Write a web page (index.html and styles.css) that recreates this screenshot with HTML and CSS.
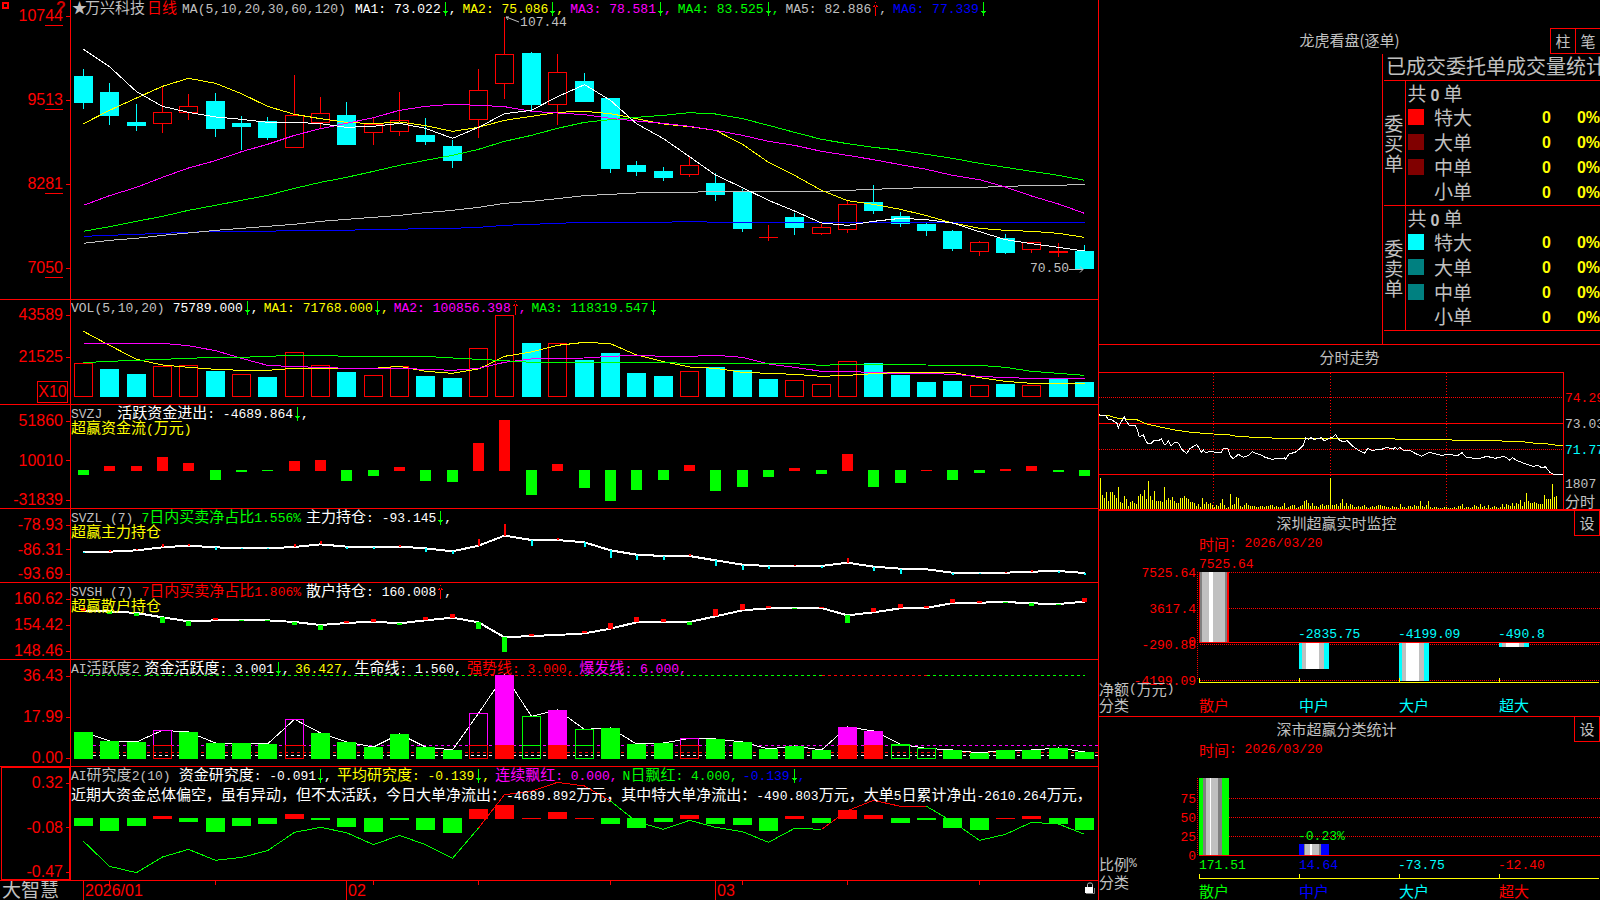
FILE: index.html
```html
<!DOCTYPE html>
<html lang="zh-CN">
<head>
<meta charset="utf-8">
<meta name="viewport" content="width=device-width, initial-scale=1">
<title>万兴科技 日线</title>
<link rel="stylesheet" href="styles.css">
</head>
<body>
<svg class="defs" aria-hidden="true">
  <symbol id="down" viewBox="0 0 8 14"><path d="M4 0H5V14H4Z M2 9H7L4.500 13Z" fill="#0f0"/></symbol>
  <symbol id="up" viewBox="0 0 8 14"><path d="M4 0H5V14H4Z M2 5H7L4.500 1Z" fill="#f00"/></symbol>
</svg>
<main class="terminal">
  <div class="charts">
    <section class="pane">
      <div class="axis axis-price">
        <span>107<u>44</u></span><span>95<u>13</u></span><span>82<u>81</u></span><span>70<u>50</u></span>
        <svg class="corner" viewBox="0 0 8 8" aria-hidden="true"><rect x="1" y="1" width="5" height="5" fill="none" stroke="#f00" stroke-width="2"/></svg>
        <b class="help">?</b>
      </div>
      <svg class="plot" id="price" viewBox="0 0 1027 897" preserveAspectRatio="none"></svg>
      <header class="legend">
        <p class="row first">
          <span class="gray zh star">★</span><span class="gray zh">万兴科技</span><span class="red zh">日线</span><span class="gray params">MA(5,10,20,30,60,120)</span>
          <span class="white">MA1: 73.022<svg class="arr"><use href="#down"/></svg>,</span>
          <span class="yellow">MA2: 75.086<svg class="arr"><use href="#down"/></svg>,</span>
          <span class="magenta">MA3: 78.581<svg class="arr"><use href="#down"/></svg>,</span>
          <span class="green">MA4: 83.525<svg class="arr"><use href="#down"/></svg>,</span>
          <span class="gray">MA5: 82.886<svg class="arr"><use href="#up"/></svg>,</span>
          <span class="blue">MA6: 77.339<svg class="arr"><use href="#down"/></svg></span>
        </p>
      </header>
      <span class="callout high"><svg width="15" height="8" viewBox="0 0 15 8"><path d="M1 1L14 6M1 1H4M1 1L3 4" fill="none" stroke="#c0c0c0"/></svg>107.44</span>
      <span class="callout low">70.50<svg width="15" height="8" viewBox="0 0 15 8"><path d="M0 4.5H14M11 1.5L14 4.5L11 7.5" fill="none" stroke="#c0c0c0"/></svg></span>
    </section>

    <section class="pane">
      <div class="axis axis-volume"><span>43589</span><span>21525</span><em>X10</em></div>
      <svg class="plot" id="volume" viewBox="0 15 1027 312" preserveAspectRatio="none"></svg>
      <header class="legend">
        <p class="row plain">
          <span class="gray name">VOL(5,10,20)</span>
          <span class="white">75789.000<svg class="arr"><use href="#down"/></svg>,</span>
          <span class="yellow">MA1: 71768.000<svg class="arr"><use href="#down"/></svg>,</span>
          <span class="magenta">MA2: 100856.398<svg class="arr"><use href="#up"/></svg>,</span>
          <span class="green">MA3: 118319.547<svg class="arr"><use href="#down"/></svg></span>
        </p>
      </header>
    </section>

    <section class="pane">
      <div class="axis"><span>51860</span><span>10010</span><span>-31839</span></div>
      <svg class="plot" id="flow" viewBox="0 330 1027 309" preserveAspectRatio="none"></svg>
      <header class="legend">
        <p class="row"><span class="gray name-wide">SVZJ</span><span class="white"><i>活跃资金进出</i>: -4689.864<svg class="arr"><use href="#down"/></svg>,</span></p>
        <p class="row yellow"><span><i>超赢资金流</i>(<i>万元</i>)</span></p>
      </header>
    </section>

    <section class="pane">
      <div class="axis"><span>-78.93</span><span>-86.31</span><span>-93.69</span></div>
      <svg class="plot" id="main-hold" viewBox="0 12 1027 219" preserveAspectRatio="none"></svg>
      <header class="legend">
        <p class="row"><span class="gray name">SVZL (7)</span><span class="green">7<i>日内买卖净占比</i>1.556%</span><span class="white"><i>主力持仓</i>: -93.145<svg class="arr"><use href="#down"/></svg>,</span></p>
        <p class="row yellow"><span><i>超赢主力持仓</i></span></p>
      </header>
    </section>

    <section class="pane">
      <div class="axis"><span>160.62</span><span>154.42</span><span>148.46</span></div>
      <svg class="plot" id="retail-hold" viewBox="0 234 1027 228" preserveAspectRatio="none"></svg>
      <header class="legend">
        <p class="row"><span class="gray name">SVSH (7)</span><span class="red">7<i>日内买卖净占比</i>1.806%</span><span class="white"><i>散户持仓</i>: 160.008<svg class="arr"><use href="#up"/></svg>,</span></p>
        <p class="row yellow"><span><i>超赢散户持仓</i></span></p>
      </header>
    </section>

    <section class="pane">
      <div class="axis"><span>36.43</span><span>17.99</span><span>0.00</span></div>
      <svg class="plot" id="activity" viewBox="0 15 1027 318" preserveAspectRatio="none"></svg>
      <header class="legend">
        <p class="row">
          <span class="gray">AI<i>活跃度</i>2</span>
          <span class="white"><i>资金活跃度</i>: 3.001<svg class="arr"><use href="#down"/></svg>,</span>
          <span class="yellow">36.427,</span>
          <span class="white"><i>生命线</i>: 1.560,</span>
          <span class="red"><i>强势线</i>: 3.000,</span>
          <span class="magenta"><i>爆发线</i>: 6.000,</span>
        </p>
      </header>
    </section>

    <section class="pane">
      <div class="axis selected"><span>0.32</span><span>-0.08</span><span>-0.47</span></div>
      <svg class="plot" id="research" viewBox="0 336 1027 339" preserveAspectRatio="none"></svg>
      <header class="legend">
        <p class="row">
          <span class="gray name">AI<i>研究度</i>2(10)</span>
          <span class="white"><i>资金研究度</i>: -0.091<svg class="arr"><use href="#down"/></svg>,</span>
          <span class="yellow"><i>平均研究度</i>: -0.139<svg class="arr"><use href="#down"/></svg>,</span>
          <span class="magenta"><i>连续飘红</i>: 0.000,</span>
          <span class="green">N<i>日飘红</i>: 4.000,</span>
          <span class="blue">-0.139<svg class="arr"><use href="#down"/></svg>,</span>
        </p>
        <p class="row note white"><span><i>近期大资金总体偏空，虽有异动，但不太活跃，今日大单净流出：</i>-4689.892<i>万元，其中特大单净流出：</i>-490.803<i>万元，大单</i>5<i>日累计净出</i>-2610.264<i>万元，</i></span></p>
      </header>
    </section>

    <footer class="timeline">
      <strong>大智慧</strong>
      <div class="dates" id="dates">
        <svg class="lock" viewBox="0 0 10 12" aria-hidden="true"><path d="M2.5 5V2.5L3.500 1H6.500L7.500 2.500V5" fill="none" stroke="#c0c0c0"/><path d="M1 11.500H9.500V6" fill="none" stroke="#808080"/><rect x="0" y="5" width="8" height="6" fill="#fff"/></svg>
      </div>
    </footer>
  </div>

  <aside class="side">
    <section class="orders">
      <div class="orders-head"><h2>龙虎看盘(逐单)</h2><div class="buttons"><button type="button">柱</button><button type="button">笔</button></div></div>
      <div class="orders-body">
        <h3>已成交委托单成交量统计</h3>
        <table>
          <tbody>
            <tr><th class="group" rowspan="5" scope="rowgroup">委买单</th><td class="total" colspan="4">共<b>0</b>单</td></tr>
            <tr><td class="sw"><span class="swatch s-red"></span></td><th scope="row">特大</th><td class="num">0</td><td class="pct">0%</td></tr>
            <tr><td class="sw"><span class="swatch s-maroon"></span></td><th scope="row">大单</th><td class="num">0</td><td class="pct">0%</td></tr>
            <tr><td class="sw"><span class="swatch s-maroon"></span></td><th scope="row">中单</th><td class="num">0</td><td class="pct">0%</td></tr>
            <tr><td class="sw"></td><th scope="row">小单</th><td class="num">0</td><td class="pct">0%</td></tr>
          </tbody>
          <tbody>
            <tr><th class="group" rowspan="5" scope="rowgroup">委卖单</th><td class="total" colspan="4">共<b>0</b>单</td></tr>
            <tr><td class="sw"><span class="swatch s-cyan"></span></td><th scope="row">特大</th><td class="num">0</td><td class="pct">0%</td></tr>
            <tr><td class="sw"><span class="swatch s-teal"></span></td><th scope="row">大单</th><td class="num">0</td><td class="pct">0%</td></tr>
            <tr><td class="sw"><span class="swatch s-teal"></span></td><th scope="row">中单</th><td class="num">0</td><td class="pct">0%</td></tr>
            <tr><td class="sw"></td><th scope="row">小单</th><td class="num">0</td><td class="pct">0%</td></tr>
          </tbody>
        </table>
      </div>
    </section>

    <section class="intraday">
      <h2>分时走势</h2>
      <div class="intraday-body">
        <svg class="plot-min" id="minute" viewBox="12 99 1392 408" preserveAspectRatio="none"></svg>
        <div class="scale"><span class="red">74.29</span><span class="gray">73.03</span><span class="cyan">71.77</span><span class="gray small vol">1807</span><span class="gray small zh">分时</span></div>
      </div>
    </section>

    <section class="stat">
      <div class="stat-head"><h2>深圳超赢实时监控</h2><button type="button">设</button></div>
      <svg class="bars" viewBox="1099 536 501 180" preserveAspectRatio="xMinYMin meet">
        <g class="grid"><path d="M1197.5 572V680M1229 572.5H1600M1229 608.5H1600M1200 644.5H1600M1200 680.5H1600"/></g>
        <g id="bars1"></g>
        <path class="zero" d="M1199 642.5H1600"/>
        <path class="base" d="M1199.500 678V682.500H1599M1299.500 678V682M1399.500 678V682M1499.500 678V682"/>
        <g class="red"><text x="1199" y="543"><tspan class="zh">时间</tspan>: 2026/03/20</text><text x="1199" y="564">7525.64</text></g>
        <g class="red end"><text x="1196" y="573">7525.64</text><text x="1196" y="609">3617.4</text><text x="1196" y="642">0</text><text x="1196" y="645">-290.88</text><text x="1196" y="681">-4199.09</text></g>
        <g class="cyan"><text x="1298" y="634">-2835.75</text><text x="1398" y="634">-4199.09</text><text x="1498" y="634">-490.8</text></g>
        <g class="gray"><text x="1099" y="688"><tspan class="zh">净额</tspan>(<tspan class="zh">万元</tspan>)</text><text class="zh" x="1099" y="704">分类</text></g>
        <g class="zh"><text class="red" x="1199" y="704">散户</text><text class="cyan" x="1299" y="704">中户</text><text class="cyan" x="1399" y="704">大户</text><text class="cyan" x="1499" y="704">超大</text></g>
      </svg>
    </section>

    <section class="stat last">
      <div class="stat-head"><h2>深市超赢分类统计</h2><button type="button">设</button></div>
      <svg class="bars" viewBox="1099 742 501 158" preserveAspectRatio="xMinYMin meet">
        <g class="grid"><path d="M1197.500 778V855M1229 798.500H1600M1229 817.500H1600M1229 836.500H1600"/></g>
        <g id="bars2"></g>
        <path class="zero" d="M1199 855.500H1600"/>
        <path class="base" d="M1199.500 874V878.500H1599M1299.500 874V878M1399.500 874V878M1499.500 874V878"/>
        <g class="red"><text x="1199" y="749"><tspan class="zh">时间</tspan>: 2026/03/20</text></g>
        <g class="red end"><text x="1196" y="799">75</text><text x="1196" y="818">50</text><text x="1196" y="837">25</text><text x="1196" y="856">0</text></g>
        <text class="green" x="1298" y="836">-0.23%</text>
        <text class="green" x="1199" y="865">171.51</text><text class="blue" x="1299" y="865">14.64</text><text class="cyan" x="1398" y="865">-73.75</text><text class="red" x="1498" y="865">-12.40</text>
        <g class="gray"><text x="1099" y="863"><tspan class="zh">比例</tspan>%</text><text class="zh" x="1099" y="881">分类</text></g>
        <g class="zh"><text class="green" x="1199" y="890">散户</text><text class="blue" x="1299" y="890">中户</text><text class="cyan" x="1399" y="890">大户</text><text class="red" x="1499" y="890">超大</text></g>
      </svg>
    </section>
  </aside>
</main>
<script src="charts.js"></script>
</body>
</html>
```

FILE: styles.css
```css
* { box-sizing: border-box; }
body {
  margin: 0;
  background: #000;
  color: #c0c0c0;
  font-family: "Liberation Mono", "Noto Sans CJK SC", monospace;
  font-size: 13px;
  line-height: 16px;
  overflow: hidden;
}
h2, h3, p { margin: 0; font-weight: normal; }
i { font-style: normal; }
i, .zh { font-family: "Noto Sans CJK SC", sans-serif; font-size: 15px; }
.defs { position: absolute; width: 0; height: 0; }
.white { color: #fff; fill: #fff; }
.gray { color: #c0c0c0; fill: #c0c0c0; }
.red { color: #f00; fill: #f00; }
.yellow { color: #ff0; fill: #ff0; }
.magenta { color: #f0f; fill: #f0f; }
.green { color: #0f0; fill: #0f0; }
.cyan { color: #0ff; fill: #0ff; }
.blue { color: #00f; fill: #00f; }

.terminal {
  display: grid;
  grid-template-columns: minmax(0, 1099fr) minmax(0, 501fr);
  min-height: 100vh;
}
.charts {
  display: grid;
  grid-template-rows: minmax(0, 300fr) minmax(0, 105fr) minmax(0, 104fr) minmax(0, 74fr) minmax(0, 77fr) minmax(0, 107fr) minmax(0, 114fr) 19px;
  height: 100vh;
  border-right: 1px solid #f00;
}
.pane {
  position: relative;
  display: grid;
  grid-template: minmax(0, 1fr) / 71px minmax(0, 1fr);
  border-bottom: 1px solid #f00;
  overflow: hidden;
}
.axis {
  display: flex;
  flex-direction: column;
  align-items: flex-end;
  justify-content: space-between;
  padding: 8px 0 0;
  border-right: 1px solid #f00;
  color: #f00;
  font-family: "Liberation Sans", sans-serif;
  font-size: 16px;
}
.axis span { display: flex; align-items: center; }
.axis span::after { content: ""; width: 4px; height: 1px; margin: 0 0 0 3px; background: #f00; }
.axis u { text-decoration: none; height: 18px; line-height: 16px; margin-bottom: -2px; border-bottom: 1px solid #f00; }
.axis-price { padding-bottom: 23px; }
.axis-volume { padding-top: 7px; }
.axis-volume span + span { margin: auto 0 16px; }
.axis-volume em { font-style: normal; line-height: 20px; width: 31px; margin: 0 2px 1px 0; border: 1px solid #f00; text-align: center; }
.selected { box-shadow: inset 0 0 0 1px #f00; margin-left: 1px; }
.corner { position: absolute; left: 2px; top: 2px; width: 8px; height: 8px; }
.help { position: absolute; left: 56px; top: 0; color: #d00000; font-size: 16px; }
.plot, .legend { grid-area: 1 / 2; }
.plot { display: block; width: 100%; height: 100%; }
.plot, .plot-min { shape-rendering: crispEdges; }
.plot *, .plot-min * { vector-effect: non-scaling-stroke; }
.legend { position: relative; overflow: hidden; }
.row { display: flex; align-items: baseline; gap: 5px; white-space: pre; height: 15px; line-height: 14px; }
.row > span { flex: none; }
.row .name { margin-right: 3px; }
.row .name-wide { margin-right: 10px; }
.first { gap: 6px; padding-left: 1px; }
.first .zh { margin-right: -4px; }
.first .star { margin-right: -8px; }
.first .params { margin: 0 3px 0 3px; }
.plain { padding-top: 1px; }
.note { margin-top: 5px; height: 16px; }
.arr { width: 8px; height: 14px; vertical-align: -3px; shape-rendering: crispEdges; }
.callout { position: absolute; display: flex; align-items: center; line-height: 14px; }
.callout.high { left: 46%; top: 16px; }
.callout.high svg { margin-top: -6px; }
.callout.low { right: 14px; bottom: 23px; }

.timeline { display: grid; grid-template-columns: 71px minmax(0, 1fr); }
.timeline strong { font: 19px/16px "Noto Sans CJK SC", sans-serif; padding-left: 2px; }
.dates { position: relative; }
.dates span {
  position: absolute; top: 0; height: 19px; padding-left: 1px;
  border-left: 1px solid #f00; color: #f00;
  font: 16px/19px "Liberation Sans", sans-serif;
}
.dates i { position: absolute; top: 0; width: 1px; height: 4px; background: #f00; }
.lock { position: absolute; right: 3px; top: 1px; width: 10px; height: 12px; }

.side {
  display: grid;
  grid-template-rows: minmax(0, 345fr) minmax(0, 166fr) minmax(0, 206fr) minmax(0, 183fr);
  height: 100vh;
  overflow: hidden;
}
.side h2 { font: 15px/23px "Noto Sans CJK SC", sans-serif; text-align: center; }
.side section { overflow: hidden; border-bottom: 1px solid #f00; }
.side .last { border-bottom: 0; }
button {
  width: 26px; height: 26px; padding: 0;
  border: 1px solid #f00; background: #000; color: #c0c0c0;
  font: 15px/20px "Noto Sans CJK SC", sans-serif;
}
.orders { display: flex; flex-direction: column; }
.orders-head { display: grid; padding-top: 28px; }
.orders-head h2, .buttons { grid-area: 1 / 1; }
.buttons { display: flex; justify-self: end; margin-right: -1px; }
.buttons button + button { margin-left: -1px; }
.orders-body { flex: 1; width: 218px; margin-left: auto; border-left: 1px solid #f00; padding-left: 1px; }
.orders h3 { font: 20px/24px "Noto Sans CJK SC", sans-serif; padding: 0 0 2px 2px; white-space: nowrap; overflow: hidden; }
table { width: 100%; border-collapse: collapse; table-layout: auto; border-bottom: 1px solid #f00; }
tbody { border-top: 1px solid #f00; }
td, th { padding: 0; height: 25px; font: 19px/20px "Noto Sans CJK SC", sans-serif; text-align: left; }
th[scope="row"] { padding-bottom: 3px; }
th.group { width: 21px; padding: 0 1px 0 0; border-right: 1px solid #f00; text-align: center; word-break: break-all; }
.total { padding-left: 2px; }
.total b, td.num, td.pct { font-family: "Liberation Sans", sans-serif; font-size: 16px; font-weight: bold; }
.total b { display: inline-block; margin: 0 4px; line-height: 16px; }
td.sw { width: 29px; padding: 0 0 3px 2px; }
td.num { color: #ff0; text-align: right; width: 60px; }
td.pct { color: #ff0; text-align: right; width: 49px; }
.swatch { display: block; width: 16px; height: 16px; }
.s-red { background: #f00; }
.s-maroon { background: #800000; }
.s-cyan { background: #0ff; }
.s-teal { background: #008080; }

.side .intraday { display: flex; flex-direction: column; border-bottom-width: 2px; }
.side .intraday h2 { padding-bottom: 4px; }
.intraday-body { flex: 1; min-height: 0; display: grid; grid-template: minmax(0, 1fr) / minmax(0, 1fr) 36px; }
.plot-min { display: block; width: 100%; height: 100%; border-top: 1px solid #f00; border-right: 1px solid #f00; }
.scale { display: flex; flex-direction: column; padding: 14px 0 0 1px; overflow: hidden; }
.scale span { line-height: 26px; white-space: nowrap; }
.scale .small { line-height: 16px; }
.scale .vol { margin-top: 13px; }

.stat-head { display: flex; height: 25px; }
.stat-head h2 { flex: 1; }
.stat-head button { margin-top: -1px; }
.bars { display: block; width: 100%; overflow: visible; shape-rendering: crispEdges; }
.bars text { dominant-baseline: central; }
.bars .end { text-anchor: end; }
.bars path { fill: none; }
.grid path { stroke: #f00; stroke-dasharray: 1 1; }
.zero { stroke: #f00; }
.base { stroke: #ff0; }
```

FILE: charts.js
```js
const NS = 'http://www.w3.org/2000/svg';
const RED = '#f00', CYAN = '#0ff', GREEN = '#0f0', WHITE = '#fff', YELLOW = '#ff0', MAGENTA = '#f0f', GRAY = '#c0c0c0', BLUE = '#00f';
const STEP = 1001 / 38;
const cx = i => Math.floor(12.5 + STEP * i) + 0.5;

function add(parent, tag, attrs) {
  const el = document.createElementNS(NS, tag);
  for (const key in attrs) el.setAttribute(key, attrs[key]);
  parent.appendChild(el);
  return el;
}
const byId = id => document.getElementById(id);
const fill = (svg, x, y, w, h, color) => add(svg, 'rect', { x, y, width: w, height: h, fill: color });
const outline = (svg, i, top, bottom, color) =>
  add(svg, 'rect', { x: cx(i) - 9, y: top, width: 18, height: Math.max(bottom - top, 0.1), fill: 'none', stroke: color });
const solid = (svg, i, top, bottom, color, half = 9.5) => fill(svg, cx(i) - half, top, half * 2, bottom - top, color);
const segment = (svg, x1, y1, x2, y2, color, dash) =>
  add(svg, 'line', Object.assign({ x1, y1, x2, y2, stroke: color }, dash ? { 'stroke-dasharray': dash } : {}));
function series(svg, ys, color, width = 1, from = 0, to = ys.length - 1) {
  const points = [];
  for (let i = from; i <= to; i++) points.push(cx(i) + ',' + ys[i]);
  add(svg, 'polyline', { points: points.join(' '), fill: 'none', stroke: color, 'stroke-width': width });
}

/* Candles: colour, body top, body bottom, high, low */
const candles = [
  ['C',228,309,207,327],['C',276,348,249,375],['C',366,378,312,393],['R',337,371,261,399],['R',319,338,282,360],
  ['C',303,387,279,411],['C',369,381,348,450],['C',363,414,351,420],['R',346,443,225,443],['R',340,368,291,388],
  ['C',345,435,306,435],['R',374,398,354,435],['R',361,395,276,408],['C',405,426,354,435],['C',438,483,420,504],
  ['R',271,359,207,414],['R',163,251,50,297],['C',159,315,156,330],['R',217,314,162,375],['C',243,306,219,306],
  ['C',294,507,294,519],['C',495,516,483,528],['C',513,534,501,543],['R',496,524,468,531],['C',549,585,519,603],
  ['C',573,687,567,696],['R',712,712,675,723],['C',651,684,639,705],['R',682,701,672,705],['R',613,689,602,699],
  ['C',606,633,555,642],['C',648,672,636,681],['C',672,693,669,708],['C',693,747,690,753],['R',727,755,723,768],
  ['C',714,759,702,762],['R',727,749,725,759],['R',754,758,729,771],['C',753,807,735,807]
];
const price = byId('price');
candles.forEach(([kind, top, bottom, high, low], i) => {
  const x = cx(i);
  if (kind === 'C') {
    segment(price, x, high, x, low, CYAN);
    solid(price, i, top, bottom, CYAN);
  } else {
    segment(price, x, high, x, top, RED);
    segment(price, x, bottom, x, low, RED);
    outline(price, i, top, bottom, RED);
  }
});
[
  [BLUE, [709,706,703,700,697,694,694,694,691,691,691,688,688,685,685,682,676,673,670,667,667,667,667,664,667,667,667,667,667,667,667,667,667,667,667,667,667,667,667]],
  [GRAY, [730,721,715,706,699,691,685,679,673,664,658,652,646,638,631,622,610,604,596,587,583,579,577,577,574,574,574,574,574,571,568,565,563,562,562,559,557,556,553]],
  [YELLOW, [371,331,294,259,235,250,281,319,343,356,367,371,366,377,394,382,361,349,337,334,341,356,372,380,391,433,487,526,571,602,613,628,647,669,685,691,694,700,712]],
  [GREEN, [694,680,664,649,631,616,601,586,565,547,532,514,496,481,466,448,424,406,385,367,359,352,346,338,342,356,376,397,418,431,442,451,463,475,490,502,514,526,541]],
  [MAGENTA, [616,587,562,532,504,482,455,433,406,386,370,353,331,319,313,316,320,334,339,344,355,363,370,379,391,406,424,436,454,466,479,494,508,526,539,561,588,612,640]],
  [WHITE, [148,200,275,319,337,351,358,367,367,371,382,379,370,385,415,382,341,331,290,254,301,371,416,470,525,563,601,633,669,676,664,655,659,669,695,719,731,742,753]]
].forEach(([color, ys]) => series(price, ys, color));

const volume = byId('volume');
const volumeTops = [205,222,237,214,211,228,238,246,172,211,231,241,214,243,249,160,61,144,145,195,174,234,243,229,216,225,252,256,268,199,204,240,261,258,271,267,271,252,261];
const volumeKinds = 'RCCRRCRCRRCRRCCRRCRCCCCRCCCRRRCCCCRCRCC';
volumeTops.forEach((top, i) => volumeKinds[i] === 'C' ? solid(volume, i, top, 306, CYAN) : outline(volume, i, top, 304, RED));
series(volume, [109,151,193,210,217,223,226,226,220,220,220,220,214,229,235,222,184,171,151,142,146,180,200,216,220,232,235,238,244,241,236,232,232,232,248,259,265,265,265], YELLOW);
series(volume, [145,145,145,145,152,167,190,211,215,217,220,220,220,223,226,220,202,192,190,189,184,181,184,184,181,187,207,217,229,229,233,235,235,238,244,248,250,250,250], MAGENTA);
series(volume, [203,199,196,193,190,187,187,184,181,181,184,184,184,184,189,193,197,202,202,202,202,202,203,205,205,205,205,206,211,208,208,208,210,211,211,217,229,235,241], GREEN);

const flow = byId('flow');
[540,513,513,486,504,555,531,528,498,495,558,543,516,558,561,444,375,600,507,579,618,585,555,510,588,576,546,519,537,477,576,564,525,555,534,522,513,531,543]
  .forEach((y, i) => y > 526 ? solid(flow, i, 525, y, GREEN, 5.5) : solid(flow, i, y, 528, RED, 5.5));

function holding(id, line, marks, negative, half) {
  const svg = byId(id);
  series(svg, line, WHITE, 2);
  marks.forEach((y, i) => {
    const up = y < line[i];
    solid(svg, i, Math.min(y, line[i]), Math.max(y, line[i]), up ? RED : negative, half);
  });
}
holding('main-hold',
  [141,140,136,127,122,127,130,130,126,118,125,126,125,130,139,122,92,105,105,112,136,149,153,153,166,179,183,183,183,173,185,191,193,203,204,203,200,198,204],
  [144,135,132,117,117,135,132,132,117,108,132,132,120,141,147,102,57,123,99,126,159,165,165,147,183,195,192,180,189,159,198,207,192,210,207,201,195,204,210], CYAN, 1);
holding('retail-hold',
  [319,319,324,337,349,346,345,346,351,360,354,350,355,346,338,352,397,393,390,385,371,352,351,351,334,316,310,309,309,331,322,310,309,294,293,291,295,297,290],
  [310,327,333,354,363,339,348,348,360,375,348,342,360,336,327,372,441,387,389,378,354,336,342,360,312,297,303,312,306,354,309,297,303,282,288,294,303,300,279], GREEN, 2.5);

/* G solid green, H hollow magenta/red, F filled magenta/red, O hollow green */
const activity = byId('activity');
const activityTops = [231,258,261,226,231,264,264,267,193,234,261,276,237,276,285,175,60,184,165,223,219,267,264,250,252,261,282,273,285,216,228,268,280,285,294,285,285,279,291];
const activityKinds = 'GGGHGGGGHGGGGGGHFOFOGGGHGGGGGFFOOGGGGGG';
[[0,15,GREEN],[15,19,RED],[19,28,GREEN],[28,32,RED],[32,38,GREEN]].forEach(([a, b, color]) => segment(activity, cx(a), 61, cx(b), 61, color, '3 3'));
segment(activity, 22, 271, 1027, 271, MAGENTA, '3 3');
segment(activity, 22, 292, 1027, 292, RED, '3 3');
segment(activity, 22, 301, 1027, 301, WHITE, '3 3');
series(activity, activityTops, WHITE);
activityTops.forEach((top, i) => {
  const kind = activityKinds[i];
  if (kind === 'G') solid(activity, i, top, 312, GREEN);
  if (kind === 'H') { outline(activity, i, top, 310, MAGENTA); outline(activity, i, 271, 310, RED); }
  if (kind === 'F') { solid(activity, i, top, 270, MAGENTA); solid(activity, i, 270, 312, RED); }
  if (kind === 'O') { outline(activity, i, top, 310, GREEN); if (top < 272) outline(activity, i, 271, 310, GREEN); }
});

const research = byId('research');
const researchLine = [559,634,653,606,583,616,607,587,532,517,533,569,541,569,610,519,419,409,382,393,438,500,523,496,517,530,562,520,523,467,436,454,454,500,556,538,502,507,538];
[[0,15,GREEN],[15,20,RED],[20,28,GREEN],[28,32,RED],[32,38,GREEN]].forEach(([a, b, color]) => series(research, researchLine, color, 1, a, b));
[513,528,513,483,501,531,513,507,477,495,516,531,495,525,534,462,450,489,471,489,507,519,501,480,507,510,528,483,504,465,480,504,495,519,525,489,483,507,525]
  .forEach((y, i) => y > 490 ? solid(research, i, 489, y, GREEN) : solid(research, i, y, 492, RED));

const dates = byId('dates');
[[0, '2026/01'], [10, '02'], [24, '03']].forEach(([i, text]) => {
  const label = document.createElement('span');
  label.textContent = text;
  label.style.left = (cx(i) - 0.5) / 10.27 + '%';
  dates.appendChild(label);
});
[1, 5, 11, 15, 20, 25, 29, 34].forEach(i => {
  const tick = document.createElement('i');
  tick.style.left = (cx(i) - 0.5) / 10.27 + '%';
  dates.appendChild(tick);
});

const minute = byId('minute');
[173, 328].forEach(y => segment(minute, 12, y, 1404, y, RED, '1 1'));
[355, 706, 1054].forEach(x => segment(minute, x, 99, x, 507, RED, '1 2'));
[250, 403].forEach(y => segment(minute, 12, y, 1404, y, RED));
[31,14,11,17,8,17,17,14,11,22,7,6,13,10,3,7,8,6,5,13,15,13,19,10,28,13,9,18,8,8,8,7,22,9,11,9,12,8,6,6,11,11,13,11,10,7,7,6,3,5,2,11,5,7,5,6,4,2,4,3,6,10,4,1,2,15,4,5,12,11,3,2,4,6,4,3,3,3,2,2,3,3,2,3,3,4,4,2,3,2,2,3,6,1,2,3,4,4,1,2,3,4,8,9,6,3,6,3,3,2,4,5,3,4,4,31,4,4,5,3,6,10,3,6,3,5,4,2,2,3,2,3,4,2,1,2,3,2,3,4,4,3,3,2,2,1,3,2,2,1,5,2,2,1,3,3,2,4,3,3,8,3,2,4,8,2,1,2,2,1,1,1,2,2,1,1,1,2,1,3,3,5,1,2,2,1,2,4,3,2,5,2,3,1,4,1,2,3,2,1,2,5,2,5,4,3,6,3,6,5,9,3,7,16,8,6,6,7,6,5,5,5,14,10,10,10,25,12,13]
  .forEach((h, i) => fill(minute, 15 + i * 6, 507 - h * 3, 3, h * 3, YELLOW));
[
  [YELLOW, '12,226 45,228 65,234 100,238 125,239 155,252 200,262 240,270 290,277 355,282 400,284 425,289 480,292 555,295 800,296 995,298 1110,301 1275,304 1320,310 1360,312 1385,316 1406,317'],
  [WHITE, '12,224 18,227 33,228 40,238 52,240 60,246 66,250 70,264 75,252 82,240 88,231 93,242 105,258 121,257 127,270 133,291 145,284 150,298 157,309 168,310 178,301 190,303 199,296 208,315 215,310 220,303 228,318 238,308 250,309 258,325 265,333 275,340 285,326 295,319 306,314 313,326 319,337 325,330 332,338 345,334 358,336 366,339 378,338 385,326 398,325 406,347 415,356 430,343 445,352 462,346 472,335 485,341 500,346 510,352 533,358 553,354 560,357 568,353 572,357 582,342 600,337 615,326 625,315 632,294 640,298 648,293 657,298 670,296 680,293 688,303 700,296 712,292 722,284 732,299 745,306 757,302 772,318 790,330 808,340 818,326 832,331 860,328 875,322 895,327 900,322 907,328 914,322 925,331 945,331 960,340 980,349 1003,337 1015,340 1040,346 1060,343 1085,347 1093,344 1101,338 1112,351 1150,357 1175,349 1200,355 1228,349 1245,361 1252,352 1262,360 1290,371 1315,379 1330,376 1341,384 1351,380 1365,397 1375,403 1404,403']
].forEach(([color, points]) => add(minute, 'polyline', { points, fill: 'none', stroke: color }));

/* Shaded columns: x, top, height, then [width, colour] stripes from left to right */
function column(group, x, y, h, stripes) {
  stripes.forEach(([w, color]) => { fill(group, x, y, w, h, color); x += w; });
}
const DARK = '#808080';
const bars1 = byId('bars1');
column(bars1, 1199, 572, 70, [[1, RED], [2, DARK], [7, GRAY], [4, WHITE], [12, GRAY], [2, DARK], [2, RED]]);
[[1299, 26], [1399, 38], [1499, 4]].forEach(([x, h]) => column(bars1, x, 643, h, [[3, CYAN], [4, GRAY], [13, WHITE], [5, GRAY], [5, CYAN]]));
const bars2 = byId('bars2');
column(bars2, 1199, 778, 77, [[4, GREEN], [3, DARK], [4, GRAY], [1, WHITE], [7, GRAY], [4, DARK], [7, GREEN]]);
column(bars2, 1299, 844, 11, [[5, BLUE], [1, DARK], [5, GRAY], [2, WHITE], [7, GRAY], [2, DARK], [8, BLUE]]);
```
